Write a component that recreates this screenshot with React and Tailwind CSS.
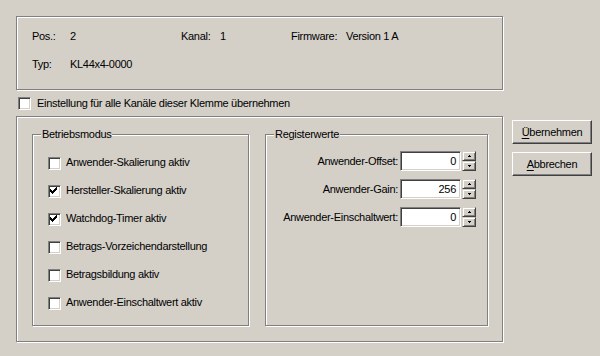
import React from 'react';

const etched = 'border border-[#808080] shadow-[inset_1px_1px_0_#fff,1px_1px_0_#fff]';

function CheckBox({ checked }) {
    return (
        <span className="block w-[13px] h-[13px] shrink-0 bg-white border border-t-[#808080] border-l-[#808080] border-b-white border-r-white shadow-[inset_1px_1px_0_#404040,inset_-1px_-1px_0_#d4d0c8]">
            {checked && (
                <svg width="11" height="11" viewBox="0 0 11 11" shapeRendering="crispEdges" className="block">
                    <path
                        d="M7 1h1v1H7z M6 2h2v1H6z M1 3h1v1H1z M5 3h3v1H5z M1 4h2v1H1z M4 4h3v1H4z M1 5h5v1H1z M2 6h3v1H2z M3 7h1v1H3z"
                        fill="#000"
                    />
                </svg>
            )}
        </span>
    );
}

function Group({ title, className, children }) {
    return (
        <div className={`relative ${etched} ${className}`}>
            <span className="absolute -top-[7px] left-[8px] px-[1px] bg-[#d4d0c8]">{title}</span>
            {children}
        </div>
    );
}

function SpinButton({ up }) {
    return (
        <div className="flex-1 flex items-center justify-center bg-[#d4d0c8] border border-t-[#d4d0c8] border-l-[#d4d0c8] border-b-[#404040] border-r-[#404040] shadow-[inset_1px_1px_0_#fff,inset_-1px_-1px_0_#808080]">
            <svg width="3" height="2" viewBox="0 0 3 2" shapeRendering="crispEdges" className="block">
                {up ? (
                    <path d="M1 0h1v1H1z M0 1h3v1H0z" fill="#000" />
                ) : (
                    <path d="M0 0h3v1H0z M1 1h1v1H1z" fill="#000" />
                )}
            </svg>
        </div>
    );
}

function NumberField({ label, value }) {
    return (
        <div className="flex items-center justify-end h-[20px]">
            <span className="mr-[2px]">{label}</span>
            <div className="w-[61px] h-[20px] bg-white border border-t-[#808080] border-l-[#808080] border-b-white border-r-white shadow-[inset_1px_1px_0_#404040,inset_-1px_-1px_0_#d4d0c8] flex items-center justify-end pr-[4px]">
                {value}
            </div>
            <div className="flex flex-col w-[14px] h-[20px] ml-[1px]">
                <SpinButton up />
                <SpinButton />
            </div>
        </div>
    );
}

function PushButton({ accel, rest }) {
    return (
        <div className="w-[80px] h-[24px] flex items-center justify-center bg-[#d4d0c8] border border-t-white border-l-white border-b-[#404040] border-r-[#404040] shadow-[inset_-1px_-1px_0_#808080]">
            <span>
                <span className="underline underline-offset-[2px]">{accel}</span>
                {rest}
            </span>
        </div>
    );
}

const modes = [
    { label: 'Anwender-Skalierung aktiv', checked: false },
    { label: 'Hersteller-Skalierung aktiv', checked: true },
    { label: 'Watchdog-Timer aktiv', checked: true },
    { label: 'Betrags-Vorzeichendarstellung', checked: false },
    { label: 'Betragsbildung aktiv', checked: false },
    { label: 'Anwender-Einschaltwert aktiv', checked: false },
];

export default function App() {
    return (
        <div className="w-[600px] h-[356px] overflow-hidden bg-[#d4d0c8] text-black font-['Liberation_Sans',Arial,sans-serif] text-[11px] leading-[13px] tracking-[-0.3px] pt-[16px] pl-[16px]">
            {/* Klemmen-Info */}
            <div className={`w-[487px] h-[74px] ${etched} pt-[13px] pl-[15px] flex flex-col gap-[15px]`}>
                <div className="flex h-[13px]">
                    <span className="w-[38px]">Pos.:</span>
                    <span className="w-[111px]">2</span>
                    <span className="w-[39px]">Kanal:</span>
                    <span className="w-[71px]">1</span>
                    <span className="w-[55px]">Firmware:</span>
                    <span>Version 1 A</span>
                </div>
                <div className="flex h-[13px]">
                    <span className="w-[38px]">Typ:</span>
                    <span>KL44x4-0000</span>
                </div>
            </div>

            <div className="flex items-center h-[13px] mt-[7px] pl-[2px]">
                <CheckBox />
                <span className="ml-[6px]">Einstellung für alle Kanäle dieser Klemme übernehmen</span>
            </div>

            <div className="flex mt-[6px]">
                <div className={`w-[487px] h-[226px] ${etched} pt-[17px] pl-[15px] flex gap-[16px]`}>
                    <Group title="Betriebsmodus" className="w-[217px] h-[192px] pt-[22px] pl-[15px]">
                        <div className="flex flex-col gap-[15px]">
                            {modes.map((m) => (
                                <div key={m.label} className="flex items-start h-[13px]">
                                    <CheckBox checked={m.checked} />
                                    <span className="ml-[5px] -mt-[1px]">{m.label}</span>
                                </div>
                            ))}
                        </div>
                    </Group>
                    <Group title="Registerwerte" className="w-[223px] h-[192px] pt-[16px] pr-[11px]">
                        <div className="flex flex-col gap-[8px]">
                            <NumberField label="Anwender-Offset:" value="0" />
                            <NumberField label="Anwender-Gain:" value="256" />
                            <NumberField label="Anwender-Einschaltwert:" value="0" />
                        </div>
                    </Group>
                </div>

                <div className="flex flex-col gap-[8px] ml-[9px] mt-[4px]">
                    <PushButton accel="Ü" rest="bernehmen" />
                    <PushButton accel="A" rest="bbrechen" />
                </div>
            </div>
        </div>
    );
}
